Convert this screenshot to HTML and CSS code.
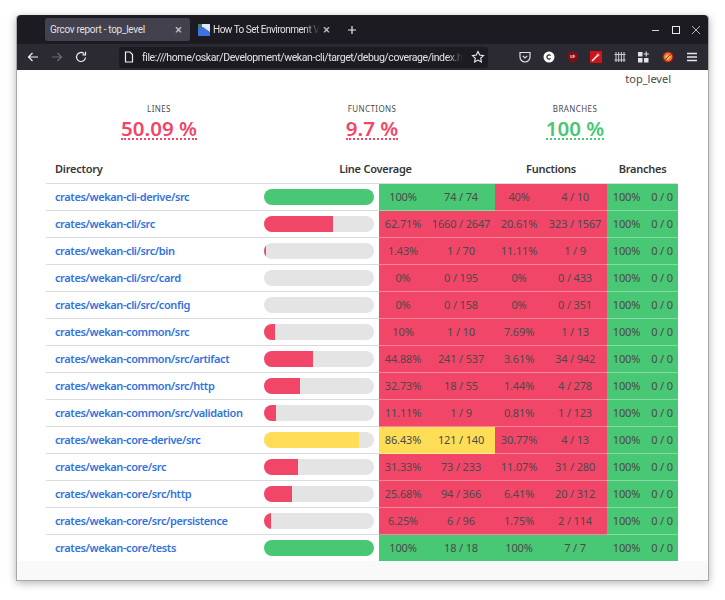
FILE: index.html
```html
<!DOCTYPE html>
<html lang="en">

<head>
    <meta charset="UTF-8">
    <meta name="viewport" content="width=device-width, initial-scale=1.0">
    <title>Grcov report - top_level</title>
    <link rel="stylesheet" href="styles.css">
</head>

<body>
    <div class="window">
        <div class="tabstrip">
            <div class="tab tab-active">
                <span class="tab-title">Grcov report - top_level</span>
                <span class="tab-close">×</span>
            </div>
            <div class="tab">
                <svg class="favicon" width="12" height="12" viewBox="0 0 12 12">
                    <rect width="12" height="12" fill="#3f6fe0"/>
                    <path d="M0 0H12V8L5 3H0Z" fill="#dfe8f5"/>
                    <rect width="4" height="4" fill="#3c7f7a"/>
                </svg>
                <span class="tab-title tab-fade">How To Set Environment Var</span>
                <span class="tab-close">×</span>
            </div>
            <svg class="new-tab" width="10" height="10" viewBox="0 0 10 10"><path d="M5 1V9M1 5H9" stroke="#e8e8ea" stroke-width="1.2"/></svg>
            <div class="win-controls">
                <svg width="10" height="10" viewBox="0 0 10 10"><path d="M1 5.5H8" stroke="#d8d8dc" stroke-width="1"/></svg>
                <svg width="10" height="10" viewBox="0 0 10 10"><rect x="1.5" y="1.5" width="7" height="7" fill="none" stroke="#e8e8ea" stroke-width="1"/></svg>
                <svg width="10" height="10" viewBox="0 0 10 10"><path d="M1 1L9 9M9 1L1 9" stroke="#b8b8bc" stroke-width="1"/></svg>
            </div>
        </div>

        <div class="toolbar">
            <div class="nav-buttons">
                <svg width="12" height="12" viewBox="0 0 12 12"><path d="M11 6H1.5M5.5 2L1.5 6L5.5 10" fill="none" stroke="#f0f0f2" stroke-width="1.2"/></svg>
                <svg width="12" height="12" viewBox="0 0 12 12"><path d="M1 6H10.5M6.5 2L10.5 6L6.5 10" fill="none" stroke="#6e6d75" stroke-width="1.2"/></svg>
                <svg width="12" height="12" viewBox="0 0 12 12"><path d="M10.5 6.5A4.5 4.5 0 1 1 9 2.6M10.5 0.8V3.8H7.5" fill="none" stroke="#f0f0f2" stroke-width="1.2"/></svg>
            </div>
            <div class="urlbar">
                <svg width="10" height="12" viewBox="0 0 10 12"><path d="M1.5 1H6L8.5 3.5V11H1.5Z" fill="none" stroke="#f0f0f2" stroke-width="1.2"/></svg>
                <span class="url-text">file:///home/oskar/Development/wekan-cli/target/debug/coverage/index.html</span>
                <svg width="14" height="14" viewBox="0 0 14 14"><path d="M7 1.5L8.7 5.1L12.5 5.6L9.7 8.2L10.4 12L7 10.1L3.6 12L4.3 8.2L1.5 5.6L5.3 5.1Z" fill="none" stroke="#f0f0f2" stroke-width="1.1"/></svg>
            </div>
            <div class="addons">
                <svg width="12" height="12" viewBox="0 0 12 12"><path d="M1 1.5H11V6A5 5 0 0 1 1 6Z" fill="none" stroke="#e0e0e2" stroke-width="1.2"/><path d="M3.8 4.8L6 7L8.2 4.8" fill="none" stroke="#e0e0e2" stroke-width="1.1"/></svg>
                <svg width="12" height="12" viewBox="0 0 12 12"><circle cx="6" cy="6" r="5.5" fill="#fff"/><path d="M7.6 4.6A2.1 2.1 0 1 0 7.6 7.4" fill="none" stroke="#333" stroke-width="1.3"/></svg>
                <svg width="12" height="12" viewBox="0 0 12 12"><path d="M1 1.5L6 0.5L11 1.5V6.5C11 9 8.5 11 6 11.8C3.5 11 1 9 1 6.5Z" fill="#800f14"/><path d="M3.7 4V6.6H5.2V4M6.5 4V6.6C8.2 6.6 8.2 4 6.5 4" fill="none" stroke="#e8c8c8" stroke-width="0.8"/></svg>
                <svg width="12" height="12" viewBox="0 0 12 12"><rect width="12" height="12" fill="#d01319"/><path d="M2 10L8 4" stroke="#fff" stroke-width="1.4"/><path d="M8 1.5L8.6 3.4L10.5 4L8.6 4.6L8 6.5L7.4 4.6L5.5 4L7.4 3.4Z" fill="#f5c6c6"/></svg>
                <svg width="12" height="12" viewBox="0 0 12 12"><path d="M2 1V11M4.7 1V11M7.4 1V11M10 1V11M0.5 3.5H11.5M0.5 9H11.5" stroke="#cfcfd2" stroke-width="1"/></svg>
                <svg width="12" height="12" viewBox="0 0 12 12"><g fill="#e4e4e6"><rect y="1" width="4.5" height="4.5"/><rect y="7" width="4.5" height="4.5"/><rect x="6" y="7" width="4.5" height="4.5"/><path d="M7.7 0.5H8.8V2.5H10.8V3.6H8.8V5.6H7.7V3.6H5.7V2.5H7.7Z"/></g></svg>
                <svg width="12" height="12" viewBox="0 0 12 12"><circle cx="6" cy="6" r="5" fill="#e67a24" stroke="#a61b1b" stroke-width="1.2"/><path d="M3.5 6.5L6 4M5 8.5L8.5 5" stroke="#f2d2a0" stroke-width="1.2"/><path d="M2.5 9.5L9.5 2.5" stroke="#a61b1b" stroke-width="0.8"/></svg>
                <svg width="12" height="12" viewBox="0 0 12 12"><path d="M1 2.5H11M1 6H11M1 9.5H11" stroke="#e8e8ea" stroke-width="1.3"/></svg>
            </div>
        </div>

        <div class="page">
            <div class="page-title">top_level</div>

            <div class="summary">
                <div class="summary-item">
                    <div class="summary-label">LINES</div>
                    <div class="summary-value red-text">50.09 %</div>
                </div>
                <div class="summary-item">
                    <div class="summary-label">FUNCTIONS</div>
                    <div class="summary-value red-text">9.7 %</div>
                </div>
                <div class="summary-item">
                    <div class="summary-label">BRANCHES</div>
                    <div class="summary-value green-text">100 %</div>
                </div>
            </div>

            <table class="report">
                <colgroup>
                    <col class="col-dir">
                    <col class="col-bar">
                    <col class="col-lp">
                    <col class="col-ln">
                    <col class="col-fp">
                    <col class="col-fn">
                    <col class="col-bp">
                    <col class="col-bn">
                </colgroup>
                <thead>
                    <tr>
                        <th class="dir-head">Directory</th>
                        <th colspan="3">Line Coverage</th>
                        <th colspan="2">Functions</th>
                        <th colspan="2">Branches</th>
                    </tr>
                </thead>
                <tbody>
                    <tr>
                        <td><a href="#">crates/wekan-cli-derive/src</a></td>
                        <td class="bar-cell"><div class="bar"><div class="fill green" style="width: 100%"></div></div></td>
                        <td class="green">100%</td><td class="green">74 / 74</td>
                        <td class="red">40%</td><td class="red">4 / 10</td>
                        <td class="green">100%</td><td class="green">0 / 0</td>
                    </tr>
                    <tr>
                        <td><a href="#">crates/wekan-cli/src</a></td>
                        <td class="bar-cell"><div class="bar"><div class="fill red" style="width: 62.71%"></div></div></td>
                        <td class="red">62.71%</td><td class="red">1660 / 2647</td>
                        <td class="red">20.61%</td><td class="red">323 / 1567</td>
                        <td class="green">100%</td><td class="green">0 / 0</td>
                    </tr>
                    <tr>
                        <td><a href="#">crates/wekan-cli/src/bin</a></td>
                        <td class="bar-cell"><div class="bar"><div class="fill red" style="width: 1.43%"></div></div></td>
                        <td class="red">1.43%</td><td class="red">1 / 70</td>
                        <td class="red">11.11%</td><td class="red">1 / 9</td>
                        <td class="green">100%</td><td class="green">0 / 0</td>
                    </tr>
                    <tr>
                        <td><a href="#">crates/wekan-cli/src/card</a></td>
                        <td class="bar-cell"><div class="bar"></div></td>
                        <td class="red">0%</td><td class="red">0 / 195</td>
                        <td class="red">0%</td><td class="red">0 / 433</td>
                        <td class="green">100%</td><td class="green">0 / 0</td>
                    </tr>
                    <tr>
                        <td><a href="#">crates/wekan-cli/src/config</a></td>
                        <td class="bar-cell"><div class="bar"></div></td>
                        <td class="red">0%</td><td class="red">0 / 158</td>
                        <td class="red">0%</td><td class="red">0 / 351</td>
                        <td class="green">100%</td><td class="green">0 / 0</td>
                    </tr>
                    <tr>
                        <td><a href="#">crates/wekan-common/src</a></td>
                        <td class="bar-cell"><div class="bar"><div class="fill red" style="width: 10%"></div></div></td>
                        <td class="red">10%</td><td class="red">1 / 10</td>
                        <td class="red">7.69%</td><td class="red">1 / 13</td>
                        <td class="green">100%</td><td class="green">0 / 0</td>
                    </tr>
                    <tr>
                        <td><a href="#">crates/wekan-common/src/artifact</a></td>
                        <td class="bar-cell"><div class="bar"><div class="fill red" style="width: 44.88%"></div></div></td>
                        <td class="red">44.88%</td><td class="red">241 / 537</td>
                        <td class="red">3.61%</td><td class="red">34 / 942</td>
                        <td class="green">100%</td><td class="green">0 / 0</td>
                    </tr>
                    <tr>
                        <td><a href="#">crates/wekan-common/src/http</a></td>
                        <td class="bar-cell"><div class="bar"><div class="fill red" style="width: 32.73%"></div></div></td>
                        <td class="red">32.73%</td><td class="red">18 / 55</td>
                        <td class="red">1.44%</td><td class="red">4 / 278</td>
                        <td class="green">100%</td><td class="green">0 / 0</td>
                    </tr>
                    <tr>
                        <td><a href="#">crates/wekan-common/src/validation</a></td>
                        <td class="bar-cell"><div class="bar"><div class="fill red" style="width: 11.11%"></div></div></td>
                        <td class="red">11.11%</td><td class="red">1 / 9</td>
                        <td class="red">0.81%</td><td class="red">1 / 123</td>
                        <td class="green">100%</td><td class="green">0 / 0</td>
                    </tr>
                    <tr>
                        <td><a href="#">crates/wekan-core-derive/src</a></td>
                        <td class="bar-cell"><div class="bar"><div class="fill yellow" style="width: 86.43%"></div></div></td>
                        <td class="yellow">86.43%</td><td class="yellow">121 / 140</td>
                        <td class="red">30.77%</td><td class="red">4 / 13</td>
                        <td class="green">100%</td><td class="green">0 / 0</td>
                    </tr>
                    <tr>
                        <td><a href="#">crates/wekan-core/src</a></td>
                        <td class="bar-cell"><div class="bar"><div class="fill red" style="width: 31.33%"></div></div></td>
                        <td class="red">31.33%</td><td class="red">73 / 233</td>
                        <td class="red">11.07%</td><td class="red">31 / 280</td>
                        <td class="green">100%</td><td class="green">0 / 0</td>
                    </tr>
                    <tr>
                        <td><a href="#">crates/wekan-core/src/http</a></td>
                        <td class="bar-cell"><div class="bar"><div class="fill red" style="width: 25.68%"></div></div></td>
                        <td class="red">25.68%</td><td class="red">94 / 366</td>
                        <td class="red">6.41%</td><td class="red">20 / 312</td>
                        <td class="green">100%</td><td class="green">0 / 0</td>
                    </tr>
                    <tr>
                        <td><a href="#">crates/wekan-core/src/persistence</a></td>
                        <td class="bar-cell"><div class="bar"><div class="fill red" style="width: 6.25%"></div></div></td>
                        <td class="red">6.25%</td><td class="red">6 / 96</td>
                        <td class="red">1.75%</td><td class="red">2 / 114</td>
                        <td class="green">100%</td><td class="green">0 / 0</td>
                    </tr>
                    <tr>
                        <td><a href="#">crates/wekan-core/tests</a></td>
                        <td class="bar-cell"><div class="bar"><div class="fill green" style="width: 100%"></div></div></td>
                        <td class="green">100%</td><td class="green">18 / 18</td>
                        <td class="green">100%</td><td class="green">7 / 7</td>
                        <td class="green">100%</td><td class="green">0 / 0</td>
                    </tr>
                </tbody>
            </table>
        </div>
        <div class="footer"></div>
    </div>
</body>

</html>
```

FILE: styles.css
```css
html, body {
    margin: 0;
    height: 600px;
    overflow: hidden;
    background-color: white;
}

body {
    font-family: "Noto Sans", sans-serif;
    color: #4a4a4a;
    padding: 15px 16px 0 16px;
    box-sizing: border-box;
}

.window {
    width: 693px;
    height: 566px;
    display: flex;
    flex-direction: column;
    border: 1px solid #a8a8a8;
    border-top: none;
    border-radius: 4px 4px 0 0;
    box-sizing: border-box;
    box-shadow: 0 2px 8px rgba(0, 0, 0, 0.3);
    background-color: #f9f9f9;
}

/* browser chrome */
.tabstrip {
    height: 29px;
    flex: none;
    display: flex;
    align-items: center;
    padding-left: 28px;
    background-color: #1c1b22;
    border-radius: 4px 4px 0 0;
    font-family: Roboto, sans-serif;
    font-size: 10px;
    color: #e0e0e4;
}

.tab {
    height: 23px;
    width: 145px;
    padding: 0 8px 0 5px;
    box-sizing: border-box;
    display: flex;
    align-items: center;
    gap: 3px;
    border-radius: 3px;
}

.tab-active {
    background-color: #42414d;
    margin-right: 3px;
}

.tab-title {
    flex: 1;
    white-space: nowrap;
    overflow: hidden;
    letter-spacing: -0.3px;
}

.tab-fade {
    letter-spacing: -0.5px;
    -webkit-mask-image: linear-gradient(to right, black 85%, transparent);
    mask-image: linear-gradient(to right, black 85%, transparent);
}

.tab-close {
    font-size: 13px;
    color: #c8c8cc;
}

.favicon {
    flex: none;
}

.new-tab {
    margin-left: 9px;
}

.win-controls {
    margin-left: auto;
    margin-right: 7px;
    display: flex;
    gap: 10px;
}

.toolbar {
    height: 26px;
    flex: none;
    display: flex;
    align-items: center;
    background-color: #2b2a33;
}

.nav-buttons {
    width: 102px;
    padding-left: 10px;
    box-sizing: border-box;
    display: flex;
    gap: 12px;
    flex: none;
}

.urlbar {
    width: 369px;
    height: 21px;
    flex: none;
    display: flex;
    align-items: center;
    gap: 8px;
    padding: 0 3px 0 5px;
    box-sizing: border-box;
    background-color: #1c1b22;
    border-radius: 3px;
    font-family: Roboto, sans-serif;
    font-size: 10.5px;
    color: #e4e4e8;
}

.url-text {
    flex: 1;
    white-space: nowrap;
    overflow: hidden;
    letter-spacing: -0.4px;
    -webkit-mask-image: linear-gradient(to right, black 95%, transparent);
    mask-image: linear-gradient(to right, black 95%, transparent);
}

.addons {
    margin-left: 31px;
    display: flex;
    gap: 11.8px;
}

/* report */
.page {
    background-color: white;
    height: 491px;
    flex: none;
    overflow: hidden;
    padding: 0 29px;
    box-sizing: border-box;
}

.page-title {
    font-size: 11px;
    line-height: 17px;
    text-align: right;
    padding-right: 8px;
}

.summary {
    display: grid;
    grid-template-columns: 226px 200px 206px;
    margin-top: 16px;
}

.summary-item {
    text-align: center;
}

.summary-label {
    font-size: 8px;
    line-height: 11px;
    letter-spacing: 0.4px;
    color: #4a4a4a;
}

.summary-value {
    display: inline-block;
    font-size: 20.5px;
    font-weight: 600;
    line-height: 18px;
    margin-top: 5px;
    padding-bottom: 1px;
    border-bottom: 2px dotted currentColor;
}

.red-text {
    color: #f14668;
}

.green-text {
    color: #48c774;
}

.report {
    width: 632px;
    margin-top: 13px;
    table-layout: fixed;
    border-collapse: collapse;
    font-size: 11px;
}

.col-dir { width: 210px; }
.col-bar { width: 123px; }
.col-lp { width: 48px; }
.col-ln { width: 68px; }
.col-fp { width: 48px; }
.col-fn { width: 64px; }
.col-bp { width: 39px; }
.col-bn { width: 32px; }

.report th {
    height: 29px;
    padding: 0;
    font-size: 11px;
    font-weight: 600;
    letter-spacing: -0.25px;
    color: #363636;
    text-align: center;
    border-bottom: 1px solid #dbdbdb;
}

.report .dir-head {
    text-align: left;
    padding-left: 9px;
}

.report td {
    height: 24px;
    padding: 0 0 2px;
    text-align: center;
    white-space: nowrap;
    letter-spacing: -0.15px;
    border-bottom: 1px solid #dbdbdb;
}

.report td:first-child {
    text-align: left;
    padding-left: 9px;
}

.report a {
    color: #3273dc;
    font-weight: 600;
    letter-spacing: -0.4px;
    text-decoration: none;
}

.report tr:last-child td {
    border-bottom: none;
}

.report td.red,
.report td.green,
.report td.yellow {
    border-bottom-color: rgba(255, 255, 255, 0.35);
}

.report .bar-cell {
    padding: 0;
    height: 26px;
}

.bar {
    width: 110px;
    height: 16px;
    margin-left: 8px;
    border-radius: 8px;
    overflow: hidden;
    background-color: #e4e4e4;
}

.fill {
    height: 100%;
}

.red {
    background-color: #f14668;
}

.green {
    background-color: #48c774;
}

.yellow {
    background-color: #ffdd57;
}

.footer {
    flex: 1;
    background-color: #f9f9f9;
}
```
